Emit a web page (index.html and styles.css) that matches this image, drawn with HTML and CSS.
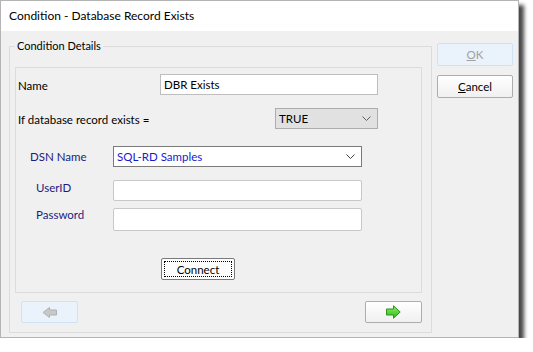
FILE: index.html
```html
<!DOCTYPE html>
<html>
<head>
<meta charset="utf-8">
<link rel="stylesheet" href="styles.css">
</head>
<body>
<div class="window">
  <div class="titlebar">Condition - Database Record Exists</div>
  <div class="client">
    <fieldset class="group">
      <legend class="legend">Condition Details</legend>
      <div class="panel">
        <div class="row row-name">
          <span class="lbl lbl-name">Name</span>
          <div class="field field-name">DBR Exists</div>
        </div>
        <div class="row row-exists">
          <span class="lbl lbl-exists">If database record exists =</span>
          <div class="combo combo-true"><span>TRUE</span><svg class="chev" width="9" height="5" viewBox="0 0 9 5"><polyline points="0.5,0.5 4.5,4.5 8.5,0.5" fill="none" stroke="#606060" stroke-width="1"/></svg></div>
        </div>
        <div class="row row-dsn">
          <span class="lbl lbl-blue lbl-dsn">DSN Name</span>
          <div class="combo combo-dsn"><span class="dsn-text">SQL-RD Samples</span><svg class="chev" width="9" height="5" viewBox="0 0 9 5"><polyline points="0.5,0.5 4.5,4.5 8.5,0.5" fill="none" stroke="#404040" stroke-width="1"/></svg></div>
        </div>
        <div class="row row-user">
          <span class="lbl lbl-blue lbl-user">UserID</span>
          <div class="field field-wide"></div>
        </div>
        <div class="row row-pass">
          <span class="lbl lbl-blue lbl-pass">Password</span>
          <div class="field field-wide field-pass"></div>
        </div>
        <div class="row row-connect">
          <div class="btn btn-connect"><span class="focus">Connect</span></div>
        </div>
      </div>
      <div class="nav">
        <div class="btn btn-disabled btn-nav">
          <svg width="15" height="11" viewBox="0 0 15 11"><polygon points="14.5,3 7.5,3 7.5,0.5 1,5.5 7.5,10.5 7.5,8 14.5,8" fill="#c8c8c8" stroke="#b0b0b0" stroke-width="1"/></svg>
        </div>
        <div class="btn btn-nav">
          <svg width="15" height="14" viewBox="0 0 15 14">
            <defs>
              <linearGradient id="g" x1="0" y1="0" x2="0" y2="1">
                <stop offset="0" stop-color="#8ef062"/>
                <stop offset="1" stop-color="#2fb81a"/>
              </linearGradient>
            </defs>
            <polygon points="0.5,4 7.5,4 7.5,0.8 14.2,7 7.5,13.2 7.5,10 0.5,10" fill="url(#g)" stroke="#2a9418" stroke-width="1"/>
          </svg>
        </div>
      </div>
    </fieldset>
    <div class="side">
      <div class="btn btn-disabled btn-side"><span class="ul">O</span>K</div>
      <div class="btn btn-side btn-cancel"><span class="ul">C</span>ancel</div>
    </div>
  </div>
</div>
</body>
</html>
```
FILE: styles.css
```css
html, body {
  margin: 0;
  padding: 0;
  background: #ffffff;
}
body {
  font-family: Lato, "Noto Sans", "Liberation Sans", sans-serif;
  font-size: 11.5px;
  color: #000;
}
.window {
  width: 519px;
  height: 338px;
  box-sizing: border-box;
  border: 1px solid #b4b4b4;
  background: #f0f0f0;
  box-shadow: 5px 5px 4px rgba(0, 0, 0, 0.72);
  display: flex;
  flex-direction: column;
}
.titlebar {
  height: 30px;
  background: #ffffff;
  padding-left: 8px;
  font-size: 12px;
  line-height: 30px;
  color: #000;
  flex: none;
}
.client {
  flex: 1;
  display: flex;
  padding: 7px 0 0 8px;
}
.group {
  margin: 0;
  width: 423px;
  height: 295px;
  box-sizing: border-box;
  border: 1px solid #dcdcdc;
  padding: 13px 9px 9px 5px;
  min-width: 0;
}
.legend {
  padding: 0 2px;
  margin-left: 0;
  font-size: 11px;
  line-height: 16px;
  height: 16px;
}
.panel {
  width: 407px;
  height: 226px;
  box-sizing: border-box;
  border: 1px solid #dcdcdc;
  padding: 6px 0 0 2px;
  display: flex;
  flex-direction: column;
}
.row {
  display: flex;
  align-items: center;
}
.lbl {
  flex: none;
  line-height: 14px;
}
.lbl-blue {
  color: #1c1c80;
}
.lbl-name { width: 142px; padding-top: 2px; }
.lbl-exists { width: 257px; padding-top: 3px; }
.row-dsn { margin-top: 17px; padding-left: 12px; }
.lbl-dsn { width: 83px; }
.row-user { margin-top: 13px; padding-left: 18px; align-items: flex-start; }
.lbl-user { width: 77px; padding-top: 1px; }
.row-pass { margin-top: 7px; padding-left: 18px; align-items: flex-start; }
.lbl-pass { width: 77px; padding-top: 0; }
.row-exists { margin-top: 13px; }
.row-connect { margin-top: 27px; padding-left: 143px; }

.field {
  box-sizing: border-box;
  height: 21px;
  background: #fff;
  border: 1px solid #c8c8c8;
  padding: 0 3px;
  line-height: 19px;
}
.field-name { width: 218px; border-color: #bebebe; }
.field-wide { width: 249px; border-color: #c8c8c8; border-radius: 2px; }
.field-pass { height: 23px; }

.combo {
  box-sizing: border-box;
  height: 21px;
  display: flex;
  align-items: center;
  justify-content: space-between;
  padding: 0 6px 0 3px;
}
.combo-true {
  width: 103px;
  background: #e1e1e1;
  border: 1px solid #adadad;
}
.combo-dsn {
  width: 249px;
  background: #ffffff;
  border: 1px solid #7a7a7a;
}
.dsn-text { color: #1a1acc; }
.chev { flex: none; }

.btn {
  box-sizing: border-box;
  display: flex;
  align-items: center;
  justify-content: center;
  background: linear-gradient(#ffffff, #f0f0f0);
  border: 1px solid #adadad;
  border-radius: 2px;
  color: #000;
}
.btn-disabled {
  background: #eaf2fb;
  border-color: #cfe2f5;
  color: #a0a0a0;
}
.btn-connect {
  width: 74px;
  height: 22px;
  border-color: #7a7a7a;
  padding: 2px;
  background: #fdfdfd;
}
.focus {
  flex: 1;
  align-self: stretch;
  display: flex;
  align-items: center;
  justify-content: center;
  border: 1px dotted #000;
}
.nav {
  display: flex;
  justify-content: space-between;
  margin-top: 8px;
  padding-left: 6px;
}
.btn-nav {
  width: 57px;
  height: 22px;
}
.side {
  margin-left: 5px;
  padding-top: 5px;
  display: flex;
  flex-direction: column;
  gap: 9px;
}
.btn-side {
  width: 76px;
  height: 23px;
}
.ul { text-decoration: underline; }
```
